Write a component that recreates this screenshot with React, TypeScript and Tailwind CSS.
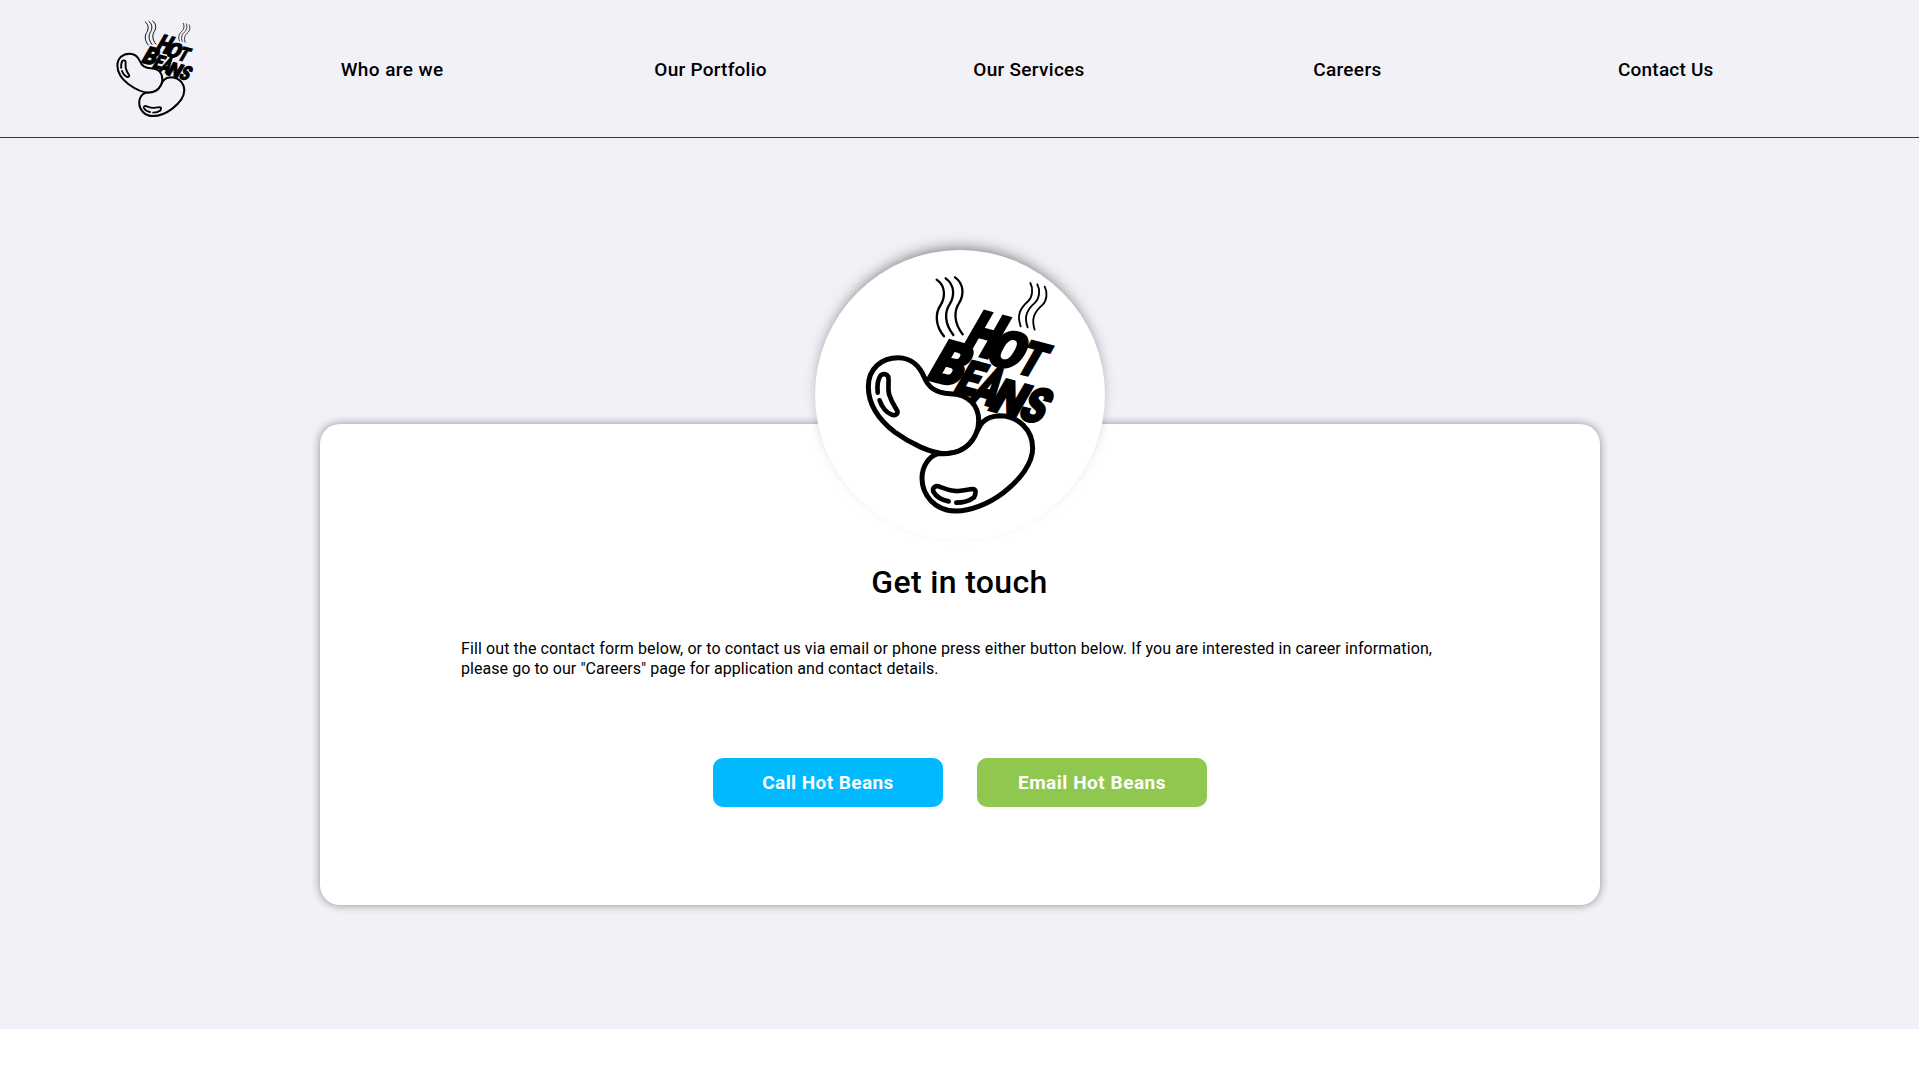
const letters = [
  { c: "H", x: 524, y: 373, w: 84, h: 136, g: 61 },
  { c: "O", x: 598, y: 409, w: 94, h: 114, g: 63 },
  { c: "T", x: 674, y: 434, w: 69, h: 106, g: 61 },
  { c: "B", x: 423, y: 458, w: 86, h: 132, g: 55 },
  { c: "E", x: 489, y: 490, w: 54, h: 104, g: 48 },
  { c: "A", x: 541, y: 520, w: 70, h: 118, g: 69 },
  { c: "N", x: 606, y: 550, w: 84, h: 105, g: 61 },
  { c: "S", x: 684, y: 572, w: 67, h: 107, g: 58 },
];

const navItems = [
  { label: "Who are we", style: "tracking-[0.42px]" },
  { label: "Our Portfolio", style: "tracking-[0.24px]" },
  { label: "Our Services", style: "tracking-[0.3px]" },
  { label: "Careers", style: "tracking-[0.34px]" },
  { label: "Contact Us", style: "tracking-[0.2px]" },
];

function Logo({ className }: { className: string }) {
  return (
    <svg
      viewBox="180 120 600 750"
      className={className}
      stroke="#000"
      strokeLinecap="round"
      strokeLinejoin="round"
    >
      <g fill="none" strokeWidth="7">
        <path d="M410 149C440 170 434 205 422 225C405 250 405 285 432 319" />
        <path d="M437 145C467 166 462 201 450 221C433 246 433 281 460 315" />
        <path d="M465 142C495 163 490 198 478 218C461 243 461 278 488 313" />
      </g>
      <g fill="none" strokeWidth="5.5">
        <path d="M691 159C700 175 698 200 685 213C660 235 650 255 662 289" />
        <path d="M712 163C721 179 719 204 706 217C681 239 671 259 683 292" />
        <path d="M734 170C743 186 741 211 728 224C703 246 693 266 704 299" />
      </g>
      <g
        fontFamily="Roboto, sans-serif"
        fontWeight="900"
        fontSize="100"
        textAnchor="middle"
        fill="#000"
        strokeWidth="5.5"
        strokeLinejoin="miter"
      >
        {letters.map((l) => (
          <text
            key={l.c}
            transform={`matrix(${(0.966 * l.w) / l.g} ${(0.26 * l.w) / l.g} ${(-0.5 * l.h) / 71} ${(0.87 * l.h) / 71} ${l.x} ${l.y})`}
          >
            {l.c}
          </text>
        ))}
      </g>
      <g fill="currentColor" strokeWidth="15">
        <path d="M205 470C205 415 245 383 295 383C335 383 360 412 372 440C382 466 400 490 450 491C505 492 536 525 536 572C536 625 495 671 437 671C395 671 330 640 285 607C235 568 205 525 205 470Z" />
        <path d="M414 671C470 675 505 655 524 620C536 598 540 560 598 557C655 557 698 600 698 655C698 700 660 750 610 788C565 822 510 843 468 843C405 843 366 795 366 745C366 710 385 680 414 671Z" />
      </g>
      <g fill="none" strokeWidth="14">
        <path d="M233 488C231 465 235 445 242 436C250 430 262 432 265 441C268 460 262 478 268 495C275 517 285 530 292 543C295 552 285 558 275 554C255 545 245 530 239 511" />
        <path d="M446 814C425 810 408 800 400 785C396 772 408 765 418 770C440 778 455 785 475 783C495 782 505 778 517 777C530 777 528 790 522 802C505 815 490 818 469 818" />
      </g>
    </svg>
  );
}

export default function App() {
  return (
    <div className="min-h-screen bg-white font-[Roboto,sans-serif] text-black">
      <header className="flex h-[138px] items-start border-b border-[#4f18a8] bg-[#f2f1f7] pl-[113.7px]">
        <Logo className="mt-[18px] h-[101.7px] w-[81.4px] shrink-0 text-[#f2f1f7]" />
        <nav className="ml-[37.9px] grid h-full w-[1592px] shrink-0 grid-cols-5 items-center pt-[3px] text-center text-[19px] font-medium">
          {navItems.map((item) => (
            <a key={item.label} href="#" className={item.style}>
              {item.label}
            </a>
          ))}
        </nav>
      </header>

      <main className="flex h-[891px] flex-col items-center bg-[#f2f1f7] pt-[286px]">
        <section className="flex h-[481px] w-[1280px] flex-col items-center rounded-[20px] bg-white shadow-[0_0_10px_rgba(0,0,0,0.42)]">
          <div className="-mt-[174px] flex h-[290px] w-[290px] shrink-0 items-start rounded-full bg-white pt-5 pl-[45px] shadow-[0_-7px_15px_-6px_rgba(0,0,0,0.55)]">
            <Logo className="h-[250px] w-[200px] text-white" />
          </div>
          <h1 className="mt-[22px] text-[32px] leading-10 font-medium tracking-[0.34px]">Get in touch</h1>
          <p className="mt-[37px] w-[997px] text-base leading-5 whitespace-nowrap">
            <span className="tracking-[0.11px]">
              Fill out the contact form below, or to contact us via email or phone press either button below. If you
              are interested in career information,
            </span>
            <br />
            <span className="tracking-[0.06px]">
              please go to our "Careers" page for application and contact details.
            </span>
          </p>
          <div className="mt-[79px] flex gap-[34px] text-[19px] font-bold text-white">
            <button className="h-[49px] w-[230px] rounded-[10px] bg-[#00b9ff] pt-0.5 pl-px tracking-[0.42px]">
              Call Hot Beans
            </button>
            <button className="h-[49px] w-[230px] rounded-[10px] bg-[#90c74f] pt-0.5 pl-px tracking-[0.52px]">
              Email Hot Beans
            </button>
          </div>
        </section>
      </main>
    </div>
  );
}
